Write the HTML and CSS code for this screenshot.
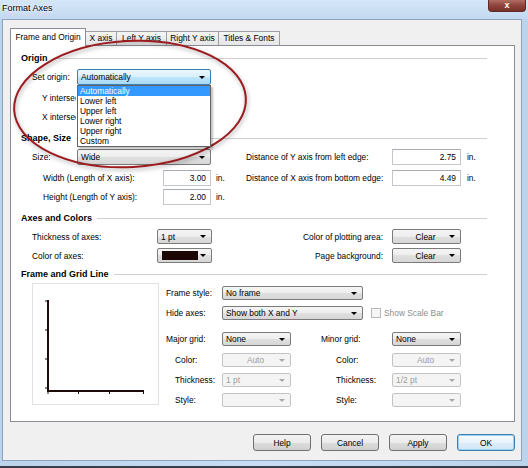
FILE: index.html
```html
<!DOCTYPE html>
<html lang="en">
<head>
    <meta charset="UTF-8">
    <meta name="viewport" content="width=device-width, initial-scale=1.0">
    <title>Format Axes</title>
    <link rel="stylesheet" href="styles.css">
</head>
<body>
    <div class="window">
        <div class="titlebar">
            <span class="title">Format Axes</span>
            <span class="close-btn">x</span>
        </div>

        <div class="client">
            <!-- Tab strip -->
            <div class="tabs">
                <div class="tab active w76">Frame and Origin</div>
                <div class="tab w31">X axis</div>
                <div class="tab w50">Left Y axis</div>
                <div class="tab w53">Right Y axis</div>
                <div class="tab w62">Titles &amp; Fonts</div>
            </div>

            <div class="panel">
                <!-- Origin -->
                <div class="section-head mt6"><span>Origin</span></div>
                <div class="row h16 mt5 indent1">
                    <span class="label w45">Set origin:</span>
                    <div class="combo-wrap">
                        <div class="combo focused w134"><span class="combo-text">Automatically</span></div>
                        <ul class="droplist">
                            <li class="selected">Automatically</li>
                            <li>Lower left</li>
                            <li>Upper left</li>
                            <li>Lower right</li>
                            <li>Upper right</li>
                            <li>Custom</li>
                        </ul>
                    </div>
                </div>
                <!-- these two rows sit under the open list, so they are clipped at its edge -->
                <div class="row h14 mt6 indent2"><span class="label clipped">Y intersects</span></div>
                <div class="row h14 mt5 indent2"><span class="label clipped">X intersects</span></div>

                <!-- Shape, Size -->
                <div class="section-head mt8"><span>Shape, Size</span></div>
                <div class="row h16 mt5">
                    <div class="col-left indent1">
                        <span class="label w45">Size:</span>
                        <div class="combo w134"><span class="combo-text">Wide</span></div>
                    </div>
                    <div class="col-right">
                        <span class="label w146">Distance of Y axis from left edge:</span>
                        <div class="field w69">2.75</div>
                        <span class="unit">in.</span>
                    </div>
                </div>
                <div class="row h16 mt5">
                    <div class="col-left indent2b">
                        <span class="label w120">Width (Length of X axis):</span>
                        <div class="field w48">3.00</div>
                        <span class="unit">in.</span>
                    </div>
                    <div class="col-right">
                        <span class="label w146">Distance of X axis from bottom edge:</span>
                        <div class="field w69">4.49</div>
                        <span class="unit">in.</span>
                    </div>
                </div>
                <div class="row h16 mt3">
                    <div class="col-left indent2b">
                        <span class="label w120">Height (Length of Y axis):</span>
                        <div class="field w48">2.00</div>
                        <span class="unit">in.</span>
                    </div>
                </div>

                <!-- Axes and Colors -->
                <div class="section-head mt7"><span>Axes and Colors</span></div>
                <div class="row h15 mt5">
                    <div class="col-left indent1">
                        <span class="label w125">Thickness of axes:</span>
                        <div class="combo w55"><span class="combo-text">1 pt</span></div>
                    </div>
                    <div class="col-right">
                        <span class="label right-label">Color of plotting area:</span>
                        <div class="combo w69"><span class="combo-text center">Clear</span></div>
                    </div>
                </div>
                <div class="row h15 mt4">
                    <div class="col-left indent1">
                        <span class="label w125">Color of axes:</span>
                        <div class="combo w55"><span class="swatch"></span></div>
                    </div>
                    <div class="col-right">
                        <span class="label right-label">Page background:</span>
                        <div class="combo w69"><span class="combo-text center">Clear</span></div>
                    </div>
                </div>

                <!-- Frame and Grid Line -->
                <div class="section-head mt5"><span>Frame and Grid Line</span></div>
                <div class="grid-area">
                    <div class="preview">
                        <svg width="125" height="120" viewBox="0 0 125 120">
                            <g stroke="#1c0b08" fill="none">
                                <line x1="15" y1="16" x2="15" y2="108" stroke-width="2"/>
                                <line x1="14" y1="107" x2="111" y2="107" stroke-width="2"/>
                                <line x1="12" y1="17" x2="15" y2="17"/>
                                <line x1="12" y1="46" x2="15" y2="46"/>
                                <line x1="12" y1="75" x2="15" y2="75"/>
                                <line x1="12" y1="104" x2="15" y2="104"/>
                                <line x1="15" y1="107" x2="15" y2="110"/>
                                <line x1="45.5" y1="107" x2="45.5" y2="110"/>
                                <line x1="76.5" y1="107" x2="76.5" y2="110"/>
                                <line x1="110.5" y1="107" x2="110.5" y2="110"/>
                            </g>
                        </svg>
                    </div>
                    <div class="grid-controls">
                        <div class="row h14 mt3">
                            <span class="label w56">Frame style:</span>
                            <div class="combo w141"><span class="combo-text">No frame</span></div>
                        </div>
                        <div class="row h14 mt6">
                            <span class="label w56">Hide axes:</span>
                            <div class="combo w141"><span class="combo-text">Show both X and Y</span></div>
                            <span class="checkbox"></span>
                            <span class="check-label">Show Scale Bar</span>
                        </div>
                        <div class="row h14 mt12">
                            <span class="label w56">Major grid:</span>
                            <div class="combo w69"><span class="combo-text">None</span></div>
                            <span class="label w71 ml30">Minor grid:</span>
                            <div class="combo w69"><span class="combo-text">None</span></div>
                        </div>
                        <div class="row h14 mt7">
                            <span class="label w56 sub-left">Color:</span>
                            <div class="combo disabled w69"><span class="combo-text center">Auto</span></div>
                            <span class="label w71 ml30 sub-right">Color:</span>
                            <div class="combo disabled w69"><span class="combo-text center">Auto</span></div>
                        </div>
                        <div class="row h14 mt6">
                            <span class="label w56 sub-left">Thickness:</span>
                            <div class="combo disabled w69"><span class="combo-text">1 pt</span></div>
                            <span class="label w71 ml30 sub-right">Thickness:</span>
                            <div class="combo disabled w69"><span class="combo-text">1/2 pt</span></div>
                        </div>
                        <div class="row h14 mt6">
                            <span class="label w56 sub-left">Style:</span>
                            <div class="combo disabled w69"><span class="combo-text"></span></div>
                            <span class="label w71 ml30 sub-right">Style:</span>
                            <div class="combo disabled w69"><span class="combo-text"></span></div>
                        </div>
                    </div>
                </div>
            </div>

            <!-- Dialog buttons -->
            <div class="buttons">
                <button class="btn">Help</button>
                <button class="btn">Cancel</button>
                <button class="btn">Apply</button>
                <button class="btn default">OK</button>
            </div>
        </div>
        <div class="bottom-frame"></div>

        <!-- Red annotation ellipse drawn over the dialog -->
        <svg class="annotation" width="250" height="140" viewBox="0 0 250 140">
            <ellipse cx="122" cy="70" rx="116" ry="63" transform="rotate(-3 122 70)" fill="none" stroke="#9b1b1f" stroke-width="2"/>
        </svg>
    </div>
</body>
</html>
```

FILE: styles.css
```css
body {
    margin: 0;
    padding: 0;
    font-family: "Liberation Sans", Arial, sans-serif;
    font-size: 8.4px;
    color: #000;
}
.window {
    position: relative;
    width: 528px;
    height: 468px;
    overflow: hidden;
    background: linear-gradient(90deg, #bcd3ec, #c8ddf3 50%, #bcd3ec);
}
.titlebar {
    display: flex;
    height: 19px;
    padding-left: 2px;
    background: linear-gradient(#d4e6f8, #c3d9f1);
}
.title {
    font-size: 9px;
    line-height: 16px;
    text-shadow: 0 0 4px #fff, 0 0 2px #fff;
}
.close-btn {
    margin-left: auto;
    margin-right: 2px;
    width: 38px;
    height: 12px;
    box-sizing: border-box;
    border: 1px solid #5e2a25;
    border-top: none;
    border-radius: 0 0 4px 4px;
    background: linear-gradient(#b26d66, #8f433c 50%, #7a302a);
    color: #fff;
    font-weight: bold;
    font-size: 9px;
    line-height: 10px;
    text-align: center;
}
.client {
    box-sizing: border-box;
    width: 520px;
    height: 442px;
    margin-left: 2px;
    padding: 8px 6px 0 7px;
    background-color: #f0f0f0;
    border: 1px solid #8fa3ba;
}
.bottom-frame {
    height: 5px;
    border-bottom: 2px solid #3b3f45;
}

/* Tabs */
.tabs {
    display: flex;
    align-items: flex-end;
    height: 17px;
}
.tab {
    box-sizing: border-box;
    height: 14px;
    line-height: 12px;
    text-align: center;
    white-space: nowrap;
    border: 1px solid #9da0a7;
    border-bottom: none;
    margin-right: -1px;
    background: linear-gradient(#f4f4f4, #e6e6e6);
}
.tab.active {
    position: relative;
    z-index: 1;
    height: 18px;
    line-height: 16px;
    margin-bottom: -1px;
    background: #fff;
    border-color: #898c95;
}
.w76 { width: 76px; }
.w31 { width: 32px; }
.w50 { width: 51px; }
.w53 { width: 53px; }
.w62 { width: 62px; }

.panel {
    box-sizing: border-box;
    width: 505px;
    height: 377px;
    padding: 0 27px 0 10px;
    background: #fff;
    border: 1px solid #898c95;
}

/* Section headers with rule */
.section-head {
    display: flex;
    align-items: center;
    height: 12px;
    font-size: 9px;
    font-weight: bold;
}
.section-head::after {
    content: "";
    flex: 1;
    margin-left: 5px;
    border-top: 1px solid #d0d0d0;
}

/* Rows */
.row {
    display: flex;
    align-items: center;
}
.h14 { height: 14px; }
.h15 { height: 15px; }
.h16 { height: 16px; }
.mt3 { margin-top: 3px; }
.mt4 { margin-top: 4px; }
.mt5 { margin-top: 5px; }
.mt6 { margin-top: 6px; }
.mt7 { margin-top: 7px; }
.mt8 { margin-top: 8px; }
.mt12 { margin-top: 12px; }
.indent1 { padding-left: 11px; }
.indent2 { padding-left: 21px; }
.indent2b { padding-left: 22px; }

.col-left {
    display: flex;
    align-items: center;
    box-sizing: border-box;
    width: 225px;
    height: 100%;
}
.col-right {
    display: flex;
    align-items: center;
    height: 100%;
}
.label {
    white-space: nowrap;
    flex-shrink: 0;
}
.label.clipped {
    width: 34px;
    overflow: hidden;
}
.w45 { width: 45px; }
.w56 { width: 56px; }
.w71 { width: 71px; }
.w120 { width: 120px; }
.w125 { width: 125px; }
.w146 { width: 146px; }
.ml30 { margin-left: 30px; }
.sub-left { box-sizing: border-box; padding-left: 9px; }
.sub-right { box-sizing: border-box; padding-left: 15px; }
.right-label {
    width: 137px;
    margin-right: 9px;
    text-align: right;
}
.unit {
    margin-left: 5px;
}
.col-right .unit {
    margin-left: 6px;
}

/* Combo boxes */
.combo-wrap {
    position: relative;
    height: 100%;
}
.combo {
    display: flex;
    align-items: center;
    box-sizing: border-box;
    height: 100%;
    padding: 0 5px 0 3px;
    border: 1px solid #7b7b7b;
    border-radius: 2px;
    background: linear-gradient(#f5f5f5, #ededed 50%, #e0e0e0 50%, #d6d6d6);
    white-space: nowrap;
    overflow: hidden;
}
.combo::after {
    content: "";
    margin-left: auto;
    border-left: 3px solid transparent;
    border-right: 3px solid transparent;
    border-top: 3px solid #000;
}
.combo-text {
    flex: 1;
}
.combo-text.center {
    text-align: center;
    padding-left: 6px;
}
.combo.focused {
    border-color: #3c7fb1;
    background: linear-gradient(#eaf6fd, #d9f0fc 50%, #bee6fd 50%, #a7d9f5);
}
.combo.disabled {
    color: #9c9c9c;
    border-color: #c3c3c3;
    background: #f4f4f4;
}
.combo.disabled::after {
    border-top-color: #a8a8a8;
}
.w134 { width: 134px; }
.w141 { width: 141px; }
.w69 { width: 69px; }
.w55 { width: 55px; }
.w48 { width: 48px; }

.swatch {
    width: 36px;
    height: 9px;
    margin-left: 1px;
    background: #1b0605;
}

.droplist {
    position: absolute;
    top: 16px;
    left: 0;
    z-index: 2;
    width: 134px;
    box-sizing: border-box;
    margin: 0;
    padding: 0;
    list-style: none;
    background: #fff;
    border: 1px solid #646464;
    box-shadow: 2px 2px 2px rgba(0, 0, 0, 0.25);
}
.droplist li {
    height: 10px;
    line-height: 10px;
    padding-left: 2px;
}
.droplist li.selected {
    background: #3399ff;
    color: #fff;
}

/* Text fields */
.field {
    box-sizing: border-box;
    height: 100%;
    padding-right: 4px;
    border: 1px solid #c3c6cb;
    border-top-color: #a9acb2;
    text-align: right;
    line-height: 14px;
    background: #fff;
}

/* Frame and grid */
.grid-area {
    display: flex;
    margin-top: 3px;
}
.preview {
    box-sizing: border-box;
    width: 127px;
    height: 122px;
    margin-left: 11px;
    border: 1px solid #e2e2e2;
}
.preview svg {
    display: block;
}
.grid-controls {
    margin-left: 7px;
}
.checkbox {
    box-sizing: border-box;
    width: 10px;
    height: 10px;
    margin-left: 8px;
    border: 1px solid #b8b8b8;
    background: #f6f6f6;
}
.check-label {
    margin-left: 3px;
    color: #8d8d8d;
    white-space: nowrap;
}

/* Buttons */
.buttons {
    display: flex;
    justify-content: flex-end;
    gap: 10px;
    margin-top: 12px;
}
.btn {
    box-sizing: border-box;
    width: 58px;
    height: 17px;
    padding: 0;
    font-family: inherit;
    font-size: 8.4px;
    color: #000;
    border: 1px solid #707070;
    border-radius: 3px;
    background: linear-gradient(#f3f3f3, #ebebeb 50%, #dddddd 50%, #d0d0d0);
}
.btn.default {
    border-color: #3c7fb1;
    background: linear-gradient(#f6fafd, #e9f3fb 50%, #dcecf9 50%, #d2e6f7);
    box-shadow: inset 0 0 0 1px #9fd0f2;
}

.annotation {
    position: absolute;
    left: 8px;
    top: 34px;
    overflow: visible;
    filter: drop-shadow(1px 2px 2px rgba(0, 0, 0, 0.35));
}
```
